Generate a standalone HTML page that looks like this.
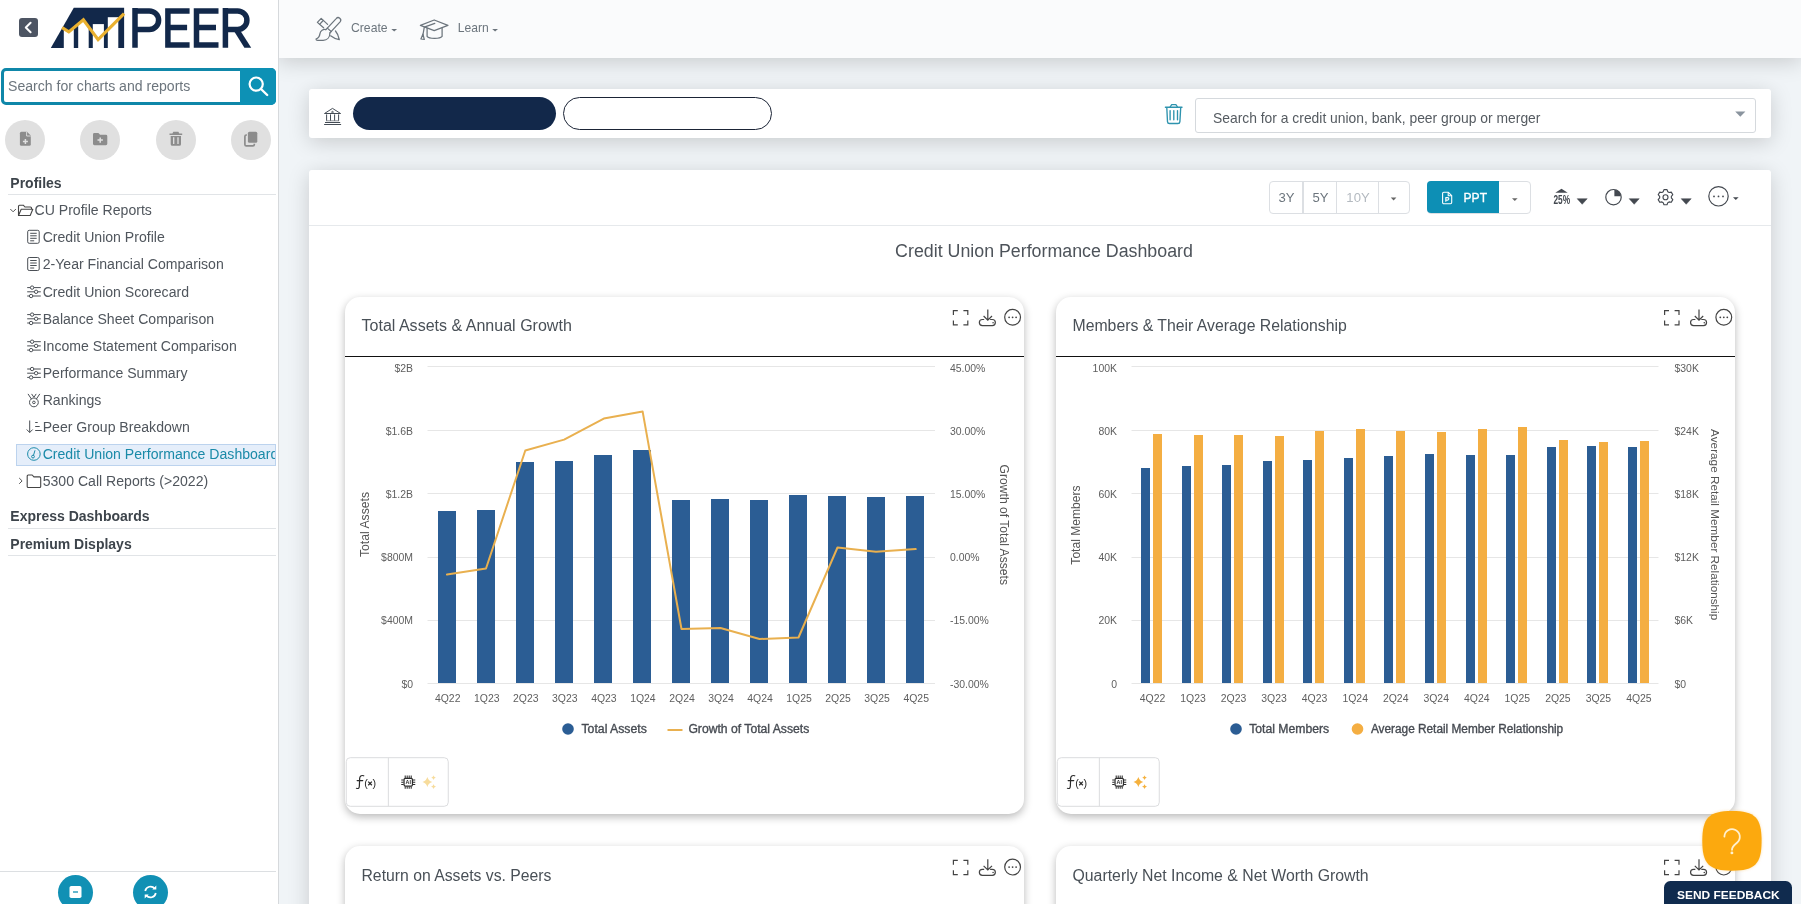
<!DOCTYPE html>
<html><head><meta charset="utf-8"><title>Peer</title>
<style>
*{box-sizing:border-box;margin:0;padding:0}
html,body{width:1801px;height:904px;overflow:hidden}
body{font-family:"Liberation Sans", sans-serif;background:#f0f4f7;position:relative;color:#495057}
.abs{position:absolute}
#side{position:absolute;left:0;top:0;width:278.7px;height:904px;background:#fff;border-right:1px solid #d6d9dc}
#hdr{position:absolute;left:278px;top:0;width:1523px;height:58px;background:#fafbfc;box-shadow:0 4px 21px rgba(0,0,0,.17)}
#inst{position:absolute;left:309px;top:89px;width:1462px;height:49px;background:#fff;border-radius:3px;box-shadow:0 4px 21px rgba(0,0,0,.17)}
#panel{position:absolute;left:309px;top:170px;width:1462px;height:760px;background:#fff;border-radius:3px 3px 0 0;box-shadow:0 4px 21px rgba(0,0,0,.17)}
.card{position:absolute;background:#fff;border-radius:15px;box-shadow:0 3px 8px rgba(0,0,0,.28)}
.ctitle{position:absolute;font-size:16.05px;color:#495057;white-space:nowrap;line-height:20px}
.hline{position:absolute;height:1.3px;background:#111}
svg text.ax{font:10.45px "Liberation Sans", sans-serif;fill:#5e5e5e}
svg text.axt{font:11.4px "Liberation Sans", sans-serif;fill:#555}
svg text.lg{font:12px "Liberation Sans", sans-serif;fill:#464b52;stroke:#464b52;stroke-width:.35px}
.ti{position:absolute;left:42.7px;font-size:14.08px;line-height:20px;color:#50565d;white-space:nowrap}
.ti.sel{color:#1a8aa8;width:232.5px;overflow:hidden}
.sec{position:absolute;left:10.3px;font-size:14px;font-weight:bold;color:#3d444b;line-height:18px;white-space:nowrap}
.sline{position:absolute;left:8px;width:268px;height:1px;background:#e1e4e7}
.cbtn{position:absolute;width:40px;height:40px;border-radius:50%;background:#e0e0e0;top:119.5px}
#wrap{position:absolute;left:0;top:0;width:1801px;height:904px;will-change:transform;overflow:hidden}
</style></head><body><div id="wrap">

<!-- header -->
<div id="hdr"></div>
<div class="abs" style="left:351px;top:20.9px;font-size:12.2px;color:#6c757d;line-height:15px">Create</div>
<div class="abs" style="left:457.8px;top:20.9px;font-size:12.1px;color:#6c757d;line-height:15px">Learn</div>

<!-- institution bar -->
<div id="inst"></div>
<div class="abs" style="left:353px;top:97px;width:202.5px;height:32.5px;border-radius:17px;background:#12284a"></div>
<div class="abs" style="left:563px;top:97px;width:209px;height:32.5px;border-radius:17px;background:#fff;border:1.3px solid #1b2436"></div>
<div class="abs" style="left:1195px;top:97.5px;width:560.5px;height:35px;border:1px solid #d5d9dd;border-radius:3px;background:#fff"></div>
<div class="abs" style="left:1213px;top:109.5px;font-size:13.87px;color:#555b61;line-height:17px;white-space:nowrap">Search for a credit union, bank, peer group or merger</div>

<!-- panel -->
<div id="panel"></div>
<div class="abs" style="left:309px;top:224.8px;width:1462px;height:1px;background:#e6e9ec"></div>
<div class="abs" style="left:895px;top:239.9px;width:298px;text-align:center;font-size:17.81px;color:#4d535a;line-height:22px;white-space:nowrap">Credit Union Performance Dashboard</div>

<!-- toolbar buttons -->
<div class="abs" style="left:1269px;top:181px;width:140.5px;height:32.6px;border:1px solid #dcdfe3;border-radius:4px;background:#fff"></div>
<div class="abs" style="left:1302.3px;top:181px;width:1.6px;height:32.6px;background:#dcdfe3"></div>
<div class="abs" style="left:1335.8px;top:181px;width:1.6px;height:32.6px;background:#dcdfe3"></div>
<div class="abs" style="left:1377.6px;top:181px;width:1.4px;height:32.6px;background:#dcdfe3"></div>
<div class="abs" style="left:1270px;top:189px;width:33px;text-align:center;font-size:13.1px;color:#6c757d;line-height:17px">3Y</div>
<div class="abs" style="left:1304px;top:189px;width:33px;text-align:center;font-size:13.1px;color:#6c757d;line-height:17px">5Y</div>
<div class="abs" style="left:1337px;top:189px;width:42px;text-align:center;font-size:13.1px;color:#b4bac0;line-height:17px">10Y</div>
<div class="abs" style="left:1427px;top:181px;width:103.5px;height:32.6px;border:1px solid #dcdfe3;border-radius:4px;background:#fff"></div>
<div class="abs" style="left:1427px;top:181.4px;width:72px;height:32px;border-radius:4px 0 0 4px;background:#0d8fb5"></div>
<div class="abs" style="left:1463.5px;top:189.5px;font-size:12.1px;color:#fff;line-height:16px;-webkit-text-stroke:.3px #fff">PPT</div>

<!-- cards -->
<div class="card" style="left:345px;top:296.5px;width:679px;height:517.5px"></div>
<div class="card" style="left:1056px;top:296.5px;width:679px;height:517.5px"></div>
<div class="card" style="left:345px;top:846px;width:679px;height:100px"></div>
<div class="card" style="left:1056px;top:846px;width:679px;height:100px"></div>
<div class="hline" style="left:345px;top:355.8px;width:679px"></div>
<div class="hline" style="left:1056px;top:355.8px;width:679px"></div>
<div class="ctitle" style="left:361.5px;top:315px">Total Assets &amp; Annual Growth</div>
<div class="ctitle" style="left:1072.5px;top:315.7px;font-size:15.8px">Members &amp; Their Average Relationship</div>
<div class="ctitle" style="left:361.5px;top:865.5px;font-size:15.75px">Return on Assets vs. Peers</div>
<div class="ctitle" style="left:1072.5px;top:865.5px;font-size:15.84px">Quarterly Net Income &amp; Net Worth Growth</div>

<!-- sidebar -->
<div id="side"></div>
<div class="abs" style="left:1px;top:68px;width:275px;height:36.5px;border:3px solid #0f87a9;border-radius:5px;background:#fff"></div>
<div class="abs" style="left:240px;top:68px;width:36px;height:36.5px;border-radius:0 5px 5px 0;background:#0d91b5"></div>
<div class="abs" style="left:8px;top:77.5px;font-size:14.09px;color:#6c757d;line-height:17px;white-space:nowrap">Search for charts and reports</div>
<div class="cbtn" style="left:5px"></div><div class="cbtn" style="left:80px"></div><div class="cbtn" style="left:156px"></div><div class="cbtn" style="left:231px"></div>
<div class="sec" style="top:174px">Profiles</div><div class="sline" style="top:194px"></div>
<div class="abs" style="left:34.5px;top:200px;font-size:14.08px;line-height:20px;color:#50565d;white-space:nowrap">CU Profile Reports</div>
<div class="abs" style="left:16px;top:443.5px;width:259.5px;height:22px;background:#e5eefa;border:1px solid #bcd3ee"></div>
<div class="ti" style="top:227px">Credit Union Profile</div>
<div class="ti" style="top:254px">2-Year Financial Comparison</div>
<div class="ti" style="top:282px">Credit Union Scorecard</div>
<div class="ti" style="top:309px">Balance Sheet Comparison</div>
<div class="ti" style="top:336px">Income Statement Comparison</div>
<div class="ti" style="top:363px">Performance Summary</div>
<div class="ti" style="top:390px">Rankings</div>
<div class="ti" style="top:417px">Peer Group Breakdown</div>
<div class="ti sel" style="top:444px">Credit Union Performance Dashboard</div>
<div class="ti" style="top:471.2px">5300 Call Reports (&gt;2022)</div>
<div class="sec" style="top:507px">Express Dashboards</div><div class="sline" style="top:528px"></div>
<div class="sec" style="top:535px">Premium Displays</div><div class="sline" style="top:555px"></div>
<div class="abs" style="left:0;top:871px;width:276px;height:1px;background:#dcdfe2"></div>
<div class="abs" style="left:58px;top:874.5px;width:35px;height:35px;border-radius:50%;background:#1190b4"></div>
<div class="abs" style="left:133px;top:874.5px;width:35px;height:35px;border-radius:50%;background:#1190b4"></div>

<!-- overlay svg for all vector stuff -->
<svg class="abs" style="left:0;top:0" width="1801" height="904" viewBox="0 0 1801 904">
<rect x="19" y="18" width="19" height="19" rx="3" fill="#4d5563"/>
<path d="M30.6,22.8 l-4.8,4.7 l4.8,4.7" fill="none" stroke="#fff" stroke-width="2" stroke-linecap="round" stroke-linejoin="round"/>
<polygon points="50.8,47.9 73.8,7.8 124.1,7.8 124.1,47.9" fill="#12284a"/>
<polygon points="63.8,28.8 68.8,31.9 73.8,27.7 73.8,48.5 63.8,48.5" fill="#fff"/>
<polygon points="78.2,24 83.4,19.7 88.7,26.9 88.7,48.5 78.2,48.5" fill="#fff"/>
<rect x="92.8" y="24.1" width="11.1" height="24.5" fill="#fff"/>
<rect x="107.8" y="17.2" width="10.5" height="31.5" fill="#fff"/>
<polyline points="62.1,27.7 68.8,31.9 83.4,19.7 98.1,39.6 124.1,13.6" fill="none" stroke="#e9b02f" stroke-width="3.2" stroke-linejoin="miter"/>
<g fill="none" stroke="#12284a" stroke-width="5.5"><path d="M135,47.8 V8.1 M135,10.9 H149.3 A9.3,9.3 0 0 1 149.3,29.5 H135"/><path d="M189.6,10.9 H167.9 V45 H189.6 M167.9,27.5 H187.1"/><path d="M218.5,10.9 H196.5 V45 H218.5 M196.5,27.5 H216"/><path d="M225.4,47.8 V8.1 M225.4,10.9 H237.6 A9.3,9.3 0 0 1 237.6,29.5 H225.4"/></g>
<polygon points="233.6,30.5 240.2,30.5 251.2,47.8 244.4,47.8" fill="#12284a"/>
<circle cx="256.2" cy="84.1" r="6.6" fill="none" stroke="#fff" stroke-width="2.2"/>
<path d="M261,89 l6.2,6" stroke="#fff" stroke-width="2.4" stroke-linecap="round"/>
<path d="M21.4,131.8 h5.6 l3.8,3.8 v8.7 a1.5,1.5 0 0 1 -1.5,1.5 h-7.9 a1.5,1.5 0 0 1 -1.5,-1.5 v-11 a1.5,1.5 0 0 1 1.5,-1.5 z" fill="#8c8c8c"/>
<path d="M26.6,131.8 v4.2 h4.2" fill="none" stroke="#e0e0e0" stroke-width="0.9"/>
<path d="M25.4,139 v5 M22.9,141.5 h5" stroke="#e0e0e0" stroke-width="1.5"/>
<path d="M94.4,133 h4 l1.7,1.8 h5.8 a1.4,1.4 0 0 1 1.4,1.4 v7.6 a1.4,1.4 0 0 1 -1.4,1.4 h-11.5 a1.4,1.4 0 0 1 -1.4,-1.4 v-9.4 a1.4,1.4 0 0 1 1.4,-1.4 z" fill="#8c8c8c"/>
<path d="M100.2,137.4 v5.4 M97.5,140.1 h5.4" stroke="#e0e0e0" stroke-width="1.5"/>
<path d="M169.5,133.4 h12.7 v1.6 h-12.7 z M173.3,131.8 h5.1 l0.9,1.6 h-6.9 z M170.7,136 h10.3 v8.2 a1.6,1.6 0 0 1 -1.6,1.6 h-7.1 a1.6,1.6 0 0 1 -1.6,-1.6 z" fill="#8c8c8c"/>
<path d="M173.7,137.3 v6.8 M178,137.3 v6.8" stroke="#e0e0e0" stroke-width="1.3"/>
<path d="M249.4,131.8 h6.4 a1.5,1.5 0 0 1 1.5,1.5 v8 a1.5,1.5 0 0 1 -1.5,1.5 h-6.4 a1.5,1.5 0 0 1 -1.5,-1.5 v-8 a1.5,1.5 0 0 1 1.5,-1.5 z" fill="#8c8c8c"/>
<path d="M246.9,135 h-0.6 a1.4,1.4 0 0 0 -1.4,1.4 v8 a1.4,1.4 0 0 0 1.4,1.4 h6.6 a1.4,1.4 0 0 0 1.4,-1.4 v-0.7" fill="none" stroke="#8c8c8c" stroke-width="1.7"/>
<rect x="69.5" y="886" width="12" height="12" rx="1.8" fill="#fff"/>
<path d="M73,892 h5" stroke="#1190b4" stroke-width="1.3"/>
<g fill="none" stroke="#fff" stroke-width="1.7"><path d="M145.2,891 a5.4,5.4 0 0 1 9.5,-2.4"/><path d="M155.8,893 a5.4,5.4 0 0 1 -9.5,2.4"/></g>
<path d="M156.3,885.6 v4 h-4 z M144.7,898.4 v-4 h4 z" fill="#fff"/>
<g fill="none" stroke="#6c757d" stroke-width="1.25" stroke-linejoin="round" stroke-linecap="round">
<path d="M325.9,29.6 L336.2,18.6 a2.5,2.5 0 0 1 3.9,3.2 L329.9,32.9"/>
<path d="M327.3,28.1 l3.9,3.4"/>
<path d="M325.9,29.6 c-2.6,-0.6 -5.6,1 -6,4.2 c-0.3,2.4 -1.6,4.3 -3.9,5.2 c0,0.9 0.6,1.3 1.6,1.3 h5.6 c3.6,0 6.7,-2.6 6.7,-7.4"/>
<path d="M323.6,27.8 L317.4,22.4 L321.2,18.4 L327.6,24.4"/>
<path d="M319.6,24.4 l3.6,-3.9"/>
<path d="M330.6,35.8 c3,2.4 6,3.4 8.7,3.9 c-0.5,-2.9 -1.4,-5.9 -3.8,-8.7"/>
</g>
<path d="M391.3,28.9 h5.8 l-2.9,2.6 z" fill="#6c757d"/>
<g fill="none" stroke="#6c757d" stroke-width="1.25" stroke-linejoin="round" stroke-linecap="round">
<path d="M420.4,25.4 L434.2,20 L447.9,25.4 L434.2,30.6 Z"/>
<path d="M427.1,28.1 V36.4 C429,38.9 439.6,39.3 442.1,36.4 V28.1"/>
<path d="M434.8,23.3 L424.3,27.2 L422.9,35"/>
<path d="M422.9,34.2 L420.9,39 L424.3,39.4 Z"/>
</g>
<path d="M492.2,28.9 h5.8 l-2.9,2.6 z" fill="#6c757d"/>
<g fill="none" stroke="#444c55" stroke-width="1" stroke-linejoin="round">
<path d="M324.5,113.5 L332.5,108.4 L340.6,113.5 Z"/>
<path d="M326.6,114.4 V120.7 M330.5,114.4 V120.7 M334.6,114.4 V120.7 M338.6,114.4 V120.7"/>
<path d="M325,122.5 H340.2 M324.1,124.5 H341.1"/>
<path d="M326.2,120.8 H339" stroke-width="0.6"/>
</g>
<circle cx="332.5" cy="112.1" r="0.8" fill="none" stroke="#444c55" stroke-width="0.9"/>
<g fill="none" stroke="#2e93ae" stroke-width="1.35" stroke-linejoin="round" stroke-linecap="round">
<path d="M1165.4,107.2 H1182"/>
<path d="M1170.1,107 L1171.7,104.6 H1175.9 L1177.5,107"/>
<path d="M1166.8,107.8 L1167.5,121.6 a2,2 0 0 0 2,1.9 h8.4 a2,2 0 0 0 2,-1.9 L1180.7,107.8"/>
<path d="M1170.1,110.6 V119.8 M1173.8,110.6 V119.8 M1177.5,110.6 V119.8"/>
</g>
<path d="M1735.2,111.6 h10.2 l-5.1,5.2 z" fill="#8a949e"/>
<path d="M1390.8,197.6 h5.6 l-2.8,2.8 z" fill="#666"/>
<path d="M1512,198.3 h5.6 l-2.8,2.8 z" fill="#666"/>
<g fill="none" stroke="#fff" stroke-width="1.1" stroke-linejoin="round"><path d="M1443.8,192.3 h4.6 l3.3,3.3 v6.9 a1.2,1.2 0 0 1 -1.2,1.2 h-6.7 a1.2,1.2 0 0 1 -1.2,-1.2 v-9 a1.2,1.2 0 0 1 1.2,-1.2 z"/><path d="M1448.2,192.5 v3.3 h3.3"/><path d="M1445.8,201.8 v-4.2 h1.8 a1.25,1.25 0 0 1 0,2.5 h-1.8"/></g>
<path d="M1555.3,192.7 L1561.5,188.8 L1567.7,192.7 Z" fill="#444950"/>
<text x="1561.8" y="203.5" text-anchor="middle" textLength="16.6" lengthAdjust="spacingAndGlyphs" style="font:bold 13.2px 'Liberation Sans',sans-serif" fill="#444950">25%</text>
<path d="M1577.2,198.7 h10 l-5,5.6 z" fill="#444950" stroke="#444950" stroke-width="0.5" stroke-linejoin="round"/>
<path d="M1629.2,198.7 h10 l-5,5.6 z" fill="#444950" stroke="#444950" stroke-width="0.5" stroke-linejoin="round"/>
<path d="M1681.2,198.7 h10 l-5,5.6 z" fill="#444950" stroke="#444950" stroke-width="0.5" stroke-linejoin="round"/>
<circle cx="1613.5" cy="197.2" r="7.7" fill="none" stroke="#444950" stroke-width="1.2"/>
<path d="M1614.4,196.3 V189.8 A6.8,6.8 0 0 1 1620.9,196.3 Z" fill="#444950"/>
<path d="M1663.20,191.77 L1663.97,189.65 L1667.03,189.65 L1667.80,191.77 L1669.06,192.49 L1671.27,192.10 L1672.80,194.75 L1671.35,196.47 L1671.35,197.93 L1672.80,199.65 L1671.27,202.30 L1669.06,201.91 L1667.80,202.63 L1667.03,204.75 L1663.97,204.75 L1663.20,202.63 L1661.94,201.91 L1659.73,202.30 L1658.20,199.65 L1659.65,197.93 L1659.65,196.47 L1658.20,194.75 L1659.73,192.10 L1661.94,192.49 Z" fill="none" stroke="#444950" stroke-width="1.15" stroke-linejoin="round"/>
<circle cx="1665.5" cy="197.2" r="2.5" fill="none" stroke="#444950" stroke-width="1.15"/>
<circle cx="1718.5" cy="196.3" r="9.7" fill="none" stroke="#444950" stroke-width="1.2"/>
<circle cx="1714" cy="196.4" r="0.9" fill="#444950"/>
<circle cx="1718.5" cy="196.4" r="0.9" fill="#444950"/>
<circle cx="1723" cy="196.4" r="0.9" fill="#444950"/>
<path d="M1733,197.3 h5.6 l-2.8,2.8 z" fill="#444950"/>
<line x1="427.5" x2="935.0" y1="366.5" y2="366.5" stroke="#e6e6e6" stroke-width="1"/>
<line x1="427.5" x2="935.0" y1="430.5" y2="430.5" stroke="#e6e6e6" stroke-width="1"/>
<line x1="427.5" x2="935.0" y1="493.5" y2="493.5" stroke="#e6e6e6" stroke-width="1"/>
<line x1="427.5" x2="935.0" y1="557.5" y2="557.5" stroke="#e6e6e6" stroke-width="1"/>
<line x1="427.5" x2="935.0" y1="620.5" y2="620.5" stroke="#e6e6e6" stroke-width="1"/>
<line x1="427.5" x2="935.0" y1="683.5" y2="683.5" stroke="#e6e6e6" stroke-width="1"/>
<rect x="438" y="511" width="18" height="172.0" fill="#2b5d94"/>
<rect x="477" y="510" width="18" height="173.0" fill="#2b5d94"/>
<rect x="516" y="462" width="18" height="221.0" fill="#2b5d94"/>
<rect x="555" y="461" width="18" height="222.0" fill="#2b5d94"/>
<rect x="594" y="455" width="18" height="228.0" fill="#2b5d94"/>
<rect x="633" y="450" width="18" height="233.0" fill="#2b5d94"/>
<rect x="672" y="500" width="18" height="183.0" fill="#2b5d94"/>
<rect x="711" y="499" width="18" height="184.0" fill="#2b5d94"/>
<rect x="750" y="500" width="18" height="183.0" fill="#2b5d94"/>
<rect x="789" y="495" width="18" height="188.0" fill="#2b5d94"/>
<rect x="828" y="496" width="18" height="187.0" fill="#2b5d94"/>
<rect x="867" y="497" width="18" height="186.0" fill="#2b5d94"/>
<rect x="906" y="496" width="18" height="187.0" fill="#2b5d94"/>
<polyline points="447,574.5 486,568.5 525.3,450.5 564.1,439.6 603.8,418.6 642.6,411.4 681.5,629 720.5,628 759.5,639 798.5,637.5 837.5,547.5 876,551.8 915.7,549.1" fill="none" stroke="#e9b04f" stroke-width="2" stroke-linejoin="round" stroke-linecap="round"/>
<text x="413" y="372.2" text-anchor="end" class="ax">$2B</text>
<text x="413" y="434.8" text-anchor="end" class="ax">$1.6B</text>
<text x="413" y="497.8" text-anchor="end" class="ax">$1.2B</text>
<text x="413" y="560.8" text-anchor="end" class="ax">$800M</text>
<text x="413" y="623.6" text-anchor="end" class="ax">$400M</text>
<text x="413" y="687.5" text-anchor="end" class="ax">$0</text>
<text x="950" y="372.2" class="ax">45.00%</text>
<text x="950" y="434.8" class="ax">30.00%</text>
<text x="950" y="497.8" class="ax">15.00%</text>
<text x="950" y="560.8" class="ax">0.00%</text>
<text x="950" y="623.6" class="ax">-15.00%</text>
<text x="950" y="687.5" class="ax">-30.00%</text>
<text x="447.7" y="702" text-anchor="middle" class="ax">4Q22</text>
<text x="486.8" y="702" text-anchor="middle" class="ax">1Q23</text>
<text x="525.8" y="702" text-anchor="middle" class="ax">2Q23</text>
<text x="564.8" y="702" text-anchor="middle" class="ax">3Q23</text>
<text x="603.9" y="702" text-anchor="middle" class="ax">4Q23</text>
<text x="642.9" y="702" text-anchor="middle" class="ax">1Q24</text>
<text x="682.0" y="702" text-anchor="middle" class="ax">2Q24</text>
<text x="721.0" y="702" text-anchor="middle" class="ax">3Q24</text>
<text x="760.0" y="702" text-anchor="middle" class="ax">4Q24</text>
<text x="799.1" y="702" text-anchor="middle" class="ax">1Q25</text>
<text x="838.1" y="702" text-anchor="middle" class="ax">2Q25</text>
<text x="877.1" y="702" text-anchor="middle" class="ax">3Q25</text>
<text x="916.2" y="702" text-anchor="middle" class="ax">4Q25</text>
<text transform="translate(369.3,524.5) rotate(-90)" text-anchor="middle" class="axt" style="font-size:12.2px">Total Assets</text>
<text transform="translate(1000.3,524.8) rotate(90)" text-anchor="middle" class="axt" style="font-size:12.13px">Growth of Total Assets</text>
<circle cx="568" cy="729" r="5.8" fill="#2b5d94"/>
<text x="581.5" y="733.3" class="lg" textLength="65.3" lengthAdjust="spacingAndGlyphs">Total Assets</text>
<line x1="667.5" x2="682.5" y1="730" y2="730" stroke="#e9b04f" stroke-width="2"/>
<text x="688.4" y="733.3" class="lg" textLength="120.9" lengthAdjust="spacingAndGlyphs">Growth of Total Assets</text>
<line x1="1131.5" x2="1658.5" y1="366.5" y2="366.5" stroke="#e6e6e6" stroke-width="1"/>
<line x1="1131.5" x2="1658.5" y1="430.5" y2="430.5" stroke="#e6e6e6" stroke-width="1"/>
<line x1="1131.5" x2="1658.5" y1="493.5" y2="493.5" stroke="#e6e6e6" stroke-width="1"/>
<line x1="1131.5" x2="1658.5" y1="557.5" y2="557.5" stroke="#e6e6e6" stroke-width="1"/>
<line x1="1131.5" x2="1658.5" y1="620.5" y2="620.5" stroke="#e6e6e6" stroke-width="1"/>
<line x1="1131.5" x2="1658.5" y1="683.5" y2="683.5" stroke="#e6e6e6" stroke-width="1"/>
<rect x="1141" y="468" width="9" height="215.0" fill="#2b5d94"/>
<rect x="1153" y="434" width="9" height="249.0" fill="#f4ae42"/>
<rect x="1182" y="466" width="9" height="217.0" fill="#2b5d94"/>
<rect x="1194" y="435" width="9" height="248.0" fill="#f4ae42"/>
<rect x="1222" y="465" width="9" height="218.0" fill="#2b5d94"/>
<rect x="1234" y="435" width="9" height="248.0" fill="#f4ae42"/>
<rect x="1263" y="461" width="9" height="222.0" fill="#2b5d94"/>
<rect x="1275" y="436" width="9" height="247.0" fill="#f4ae42"/>
<rect x="1303" y="460" width="9" height="223.0" fill="#2b5d94"/>
<rect x="1315" y="431" width="9" height="252.0" fill="#f4ae42"/>
<rect x="1344" y="458" width="9" height="225.0" fill="#2b5d94"/>
<rect x="1356" y="429" width="9" height="254.0" fill="#f4ae42"/>
<rect x="1384" y="456" width="9" height="227.0" fill="#2b5d94"/>
<rect x="1396" y="431" width="9" height="252.0" fill="#f4ae42"/>
<rect x="1425" y="454" width="9" height="229.0" fill="#2b5d94"/>
<rect x="1437" y="432" width="9" height="251.0" fill="#f4ae42"/>
<rect x="1466" y="455" width="9" height="228.0" fill="#2b5d94"/>
<rect x="1478" y="429" width="9" height="254.0" fill="#f4ae42"/>
<rect x="1506" y="455" width="9" height="228.0" fill="#2b5d94"/>
<rect x="1518" y="427" width="9" height="256.0" fill="#f4ae42"/>
<rect x="1547" y="447" width="9" height="236.0" fill="#2b5d94"/>
<rect x="1559" y="440" width="9" height="243.0" fill="#f4ae42"/>
<rect x="1587" y="446" width="9" height="237.0" fill="#2b5d94"/>
<rect x="1599" y="442" width="9" height="241.0" fill="#f4ae42"/>
<rect x="1628" y="447" width="9" height="236.0" fill="#2b5d94"/>
<rect x="1640" y="441" width="9" height="242.0" fill="#f4ae42"/>
<text x="1117" y="372.2" text-anchor="end" class="ax">100K</text>
<text x="1117" y="434.8" text-anchor="end" class="ax">80K</text>
<text x="1117" y="497.8" text-anchor="end" class="ax">60K</text>
<text x="1117" y="560.8" text-anchor="end" class="ax">40K</text>
<text x="1117" y="623.6" text-anchor="end" class="ax">20K</text>
<text x="1117" y="687.5" text-anchor="end" class="ax">0</text>
<text x="1674.5" y="372.2" class="ax">$30K</text>
<text x="1674.5" y="434.8" class="ax">$24K</text>
<text x="1674.5" y="497.8" class="ax">$18K</text>
<text x="1674.5" y="560.8" class="ax">$12K</text>
<text x="1674.5" y="623.6" class="ax">$6K</text>
<text x="1674.5" y="687.5" class="ax">$0</text>
<text x="1152.5" y="702" text-anchor="middle" class="ax">4Q22</text>
<text x="1193.0" y="702" text-anchor="middle" class="ax">1Q23</text>
<text x="1233.5" y="702" text-anchor="middle" class="ax">2Q23</text>
<text x="1274.1" y="702" text-anchor="middle" class="ax">3Q23</text>
<text x="1314.6" y="702" text-anchor="middle" class="ax">4Q23</text>
<text x="1355.2" y="702" text-anchor="middle" class="ax">1Q24</text>
<text x="1395.7" y="702" text-anchor="middle" class="ax">2Q24</text>
<text x="1436.2" y="702" text-anchor="middle" class="ax">3Q24</text>
<text x="1476.8" y="702" text-anchor="middle" class="ax">4Q24</text>
<text x="1517.3" y="702" text-anchor="middle" class="ax">1Q25</text>
<text x="1557.9" y="702" text-anchor="middle" class="ax">2Q25</text>
<text x="1598.4" y="702" text-anchor="middle" class="ax">3Q25</text>
<text x="1638.9" y="702" text-anchor="middle" class="ax">4Q25</text>
<text transform="translate(1080.3,525) rotate(-90)" text-anchor="middle" class="axt" style="font-size:12.1px">Total Members</text>
<text transform="translate(1711,524.7) rotate(90)" text-anchor="middle" class="axt" style="font-size:11.76px">Average Retail Member Relationship</text>
<circle cx="1236" cy="729" r="5.8" fill="#2b5d94"/>
<text x="1249.2" y="733.3" class="lg" textLength="79.9" lengthAdjust="spacingAndGlyphs">Total Members</text>
<circle cx="1357.5" cy="729" r="5.8" fill="#f4ae42"/>
<text x="1370.9" y="733.3" class="lg" textLength="192.3" lengthAdjust="spacingAndGlyphs">Average Retail Member Relationship</text>
<g fill="none" stroke="#444" stroke-width="1.2" stroke-linecap="butt">
<path d="M953.4,315 v-4.4 h4.4 M963.4,310.6 h4.4 v4.4 M967.8,320.5 v4.4 h-4.4 M957.8,324.9 h-4.4 v-4.4"/>
<path d="M987.8,309.5 v10.5 M983.5999999999999,316 l4.2,4.2 l4.2,-4.2"/>
<path d="M984.1999999999999,319.5 h-1.8 a3.05,3.05 0 0 0 0,6.1 h9.9 a3.05,3.05 0 0 0 0,-6.1 h-2.2"/>
<circle cx="1012.5999999999999" cy="317.3" r="7.9"/>
</g>
<circle cx="993.0999999999999" cy="322.7" r="0.8" fill="#444"/>
<g fill="#444"><circle cx="1009.0999999999999" cy="317.3" r="0.9"/><circle cx="1012.5999999999999" cy="317.3" r="0.9"/><circle cx="1016.0999999999999" cy="317.3" r="0.9"/></g>
<g fill="none" stroke="#444" stroke-width="1.2" stroke-linecap="butt">
<path d="M1664.6,315 v-4.4 h4.4 M1674.6,310.6 h4.4 v4.4 M1679,320.5 v4.4 h-4.4 M1669,324.9 h-4.4 v-4.4"/>
<path d="M1699,309.5 v10.5 M1694.8,316 l4.2,4.2 l4.2,-4.2"/>
<path d="M1695.4,319.5 h-1.8 a3.05,3.05 0 0 0 0,6.1 h9.9 a3.05,3.05 0 0 0 0,-6.1 h-2.2"/>
<circle cx="1723.8" cy="317.3" r="7.9"/>
</g>
<circle cx="1704.3" cy="322.7" r="0.8" fill="#444"/>
<g fill="#444"><circle cx="1720.3" cy="317.3" r="0.9"/><circle cx="1723.8" cy="317.3" r="0.9"/><circle cx="1727.3" cy="317.3" r="0.9"/></g>
<g fill="none" stroke="#444" stroke-width="1.2" stroke-linecap="butt">
<path d="M953.4,864.8 v-4.4 h4.4 M963.4,860.4 h4.4 v4.4 M967.8,870.3 v4.4 h-4.4 M957.8,874.6999999999999 h-4.4 v-4.4"/>
<path d="M987.8,859.3 v10.5 M983.5999999999999,865.8 l4.2,4.2 l4.2,-4.2"/>
<path d="M984.1999999999999,869.3 h-1.8 a3.05,3.05 0 0 0 0,6.1 h9.9 a3.05,3.05 0 0 0 0,-6.1 h-2.2"/>
<circle cx="1012.5999999999999" cy="867.0999999999999" r="7.9"/>
</g>
<circle cx="993.0999999999999" cy="872.5" r="0.8" fill="#444"/>
<g fill="#444"><circle cx="1009.0999999999999" cy="867.0999999999999" r="0.9"/><circle cx="1012.5999999999999" cy="867.0999999999999" r="0.9"/><circle cx="1016.0999999999999" cy="867.0999999999999" r="0.9"/></g>
<g fill="none" stroke="#444" stroke-width="1.2" stroke-linecap="butt">
<path d="M1664.6,864.8 v-4.4 h4.4 M1674.6,860.4 h4.4 v4.4 M1679,870.3 v4.4 h-4.4 M1669,874.6999999999999 h-4.4 v-4.4"/>
<path d="M1699,859.3 v10.5 M1694.8,865.8 l4.2,4.2 l4.2,-4.2"/>
<path d="M1695.4,869.3 h-1.8 a3.05,3.05 0 0 0 0,6.1 h9.9 a3.05,3.05 0 0 0 0,-6.1 h-2.2"/>
<circle cx="1723.8" cy="867.0999999999999" r="7.9"/>
</g>
<circle cx="1704.3" cy="872.5" r="0.8" fill="#444"/>
<g fill="#444"><circle cx="1720.3" cy="867.0999999999999" r="0.9"/><circle cx="1723.8" cy="867.0999999999999" r="0.9"/><circle cx="1727.3" cy="867.0999999999999" r="0.9"/></g>
<rect x="346.25" y="757.7" width="102" height="48.6" rx="4" fill="#fff" stroke="#dbdcde"/>
<line x1="388.35" x2="388.35" y1="757.7" y2="806.2" stroke="#dbdcde"/>
<path d="M363.75,775.8000000000001 c-2.6,-0.9 -4,0.3 -4.1,2.6 l-0.3,7.6 c-0.1,2.2 -0.9,2.9 -2.9,2.3 M357.15,780.6 h5.6" fill="none" stroke="#2b2b2b" stroke-width="1.2" stroke-linecap="round"/>
<text x="364.25" y="787.0" style="font:10.8px 'Liberation Sans',sans-serif" fill="#2b2b2b">(</text>
<text x="372.55" y="787.0" style="font:10.8px 'Liberation Sans',sans-serif" fill="#2b2b2b">)</text>
<path d="M368.25,781.6 l3.6,3.6 M371.85,781.6 l-3.6,3.6" stroke="#2b2b2b" stroke-width="1.25"/>
<rect x="404.05" y="778.3000000000001" width="8.4" height="7.8" rx="1.3" fill="none" stroke="#2b2b2b" stroke-width="1.2"/>
<path d="M405.2,777.9000000000001 v-2.3 M405.2,786.5 v2.3 M407.2,777.9000000000001 v-2.3 M407.2,786.5 v2.3 M409.2,777.9000000000001 v-2.3 M409.2,786.5 v2.3 M411.2,777.9000000000001 v-2.3 M411.2,786.5 v2.3 M403.65000000000003,779.9 h-2.4 M412.84999999999997,779.9 h2.4 M403.65000000000003,782.2 h-2.4 M412.84999999999997,782.2 h2.4 M403.65000000000003,784.5 h-2.4 M412.84999999999997,784.5 h2.4" stroke="#2b2b2b" stroke-width="1.05"/>
<text x="408.25" y="784.2" text-anchor="middle" style="font:bold 5.4px 'Liberation Sans',sans-serif" fill="#2b2b2b">AI</text>
<g fill="#f7dc9c">
<path d="M427.35,777.1 C428.25,779.8 429.55,781.1 432.25,782.0 C429.55,782.9 428.25,784.2 427.35,786.9 C426.45000000000005,784.2 425.15000000000003,782.9 422.45000000000005,782.0 C425.15000000000003,781.1 426.45000000000005,779.8 427.35,777.1 Z"/>
<path d="M433.55,775.3000000000001 C433.95,776.8000000000001 434.45,777.3000000000001 435.95,777.7 C434.45,778.1 433.95,778.6 433.55,780.1 C433.15000000000003,778.6 432.65000000000003,778.1 431.15000000000003,777.7 C432.65000000000003,777.3000000000001 433.15000000000003,776.8000000000001 433.55,775.3000000000001 Z"/>
<path d="M433.55,784.1 C433.95,785.8000000000001 434.45,786.3000000000001 436.15000000000003,786.7 C434.45,787.1 433.95,787.6 433.55,789.3000000000001 C433.15000000000003,787.6 432.65000000000003,787.1 430.95,786.7 C432.65000000000003,786.3000000000001 433.15000000000003,785.8000000000001 433.55,784.1 Z"/>
</g>
<rect x="1057.25" y="757.7" width="102" height="48.6" rx="4" fill="#fff" stroke="#dbdcde"/>
<line x1="1099.35" x2="1099.35" y1="757.7" y2="806.2" stroke="#dbdcde"/>
<path d="M1074.75,775.8000000000001 c-2.6,-0.9 -4,0.3 -4.1,2.6 l-0.3,7.6 c-0.1,2.2 -0.9,2.9 -2.9,2.3 M1068.15,780.6 h5.6" fill="none" stroke="#2b2b2b" stroke-width="1.2" stroke-linecap="round"/>
<text x="1075.25" y="787.0" style="font:10.8px 'Liberation Sans',sans-serif" fill="#2b2b2b">(</text>
<text x="1083.55" y="787.0" style="font:10.8px 'Liberation Sans',sans-serif" fill="#2b2b2b">)</text>
<path d="M1079.25,781.6 l3.6,3.6 M1082.85,781.6 l-3.6,3.6" stroke="#2b2b2b" stroke-width="1.25"/>
<rect x="1115.05" y="778.3000000000001" width="8.4" height="7.8" rx="1.3" fill="none" stroke="#2b2b2b" stroke-width="1.2"/>
<path d="M1116.2,777.9000000000001 v-2.3 M1116.2,786.5 v2.3 M1118.2,777.9000000000001 v-2.3 M1118.2,786.5 v2.3 M1120.2,777.9000000000001 v-2.3 M1120.2,786.5 v2.3 M1122.2,777.9000000000001 v-2.3 M1122.2,786.5 v2.3 M1114.6499999999999,779.9 h-2.4 M1123.8500000000001,779.9 h2.4 M1114.6499999999999,782.2 h-2.4 M1123.8500000000001,782.2 h2.4 M1114.6499999999999,784.5 h-2.4 M1123.8500000000001,784.5 h2.4" stroke="#2b2b2b" stroke-width="1.05"/>
<text x="1119.25" y="784.2" text-anchor="middle" style="font:bold 5.4px 'Liberation Sans',sans-serif" fill="#2b2b2b">AI</text>
<g fill="#f5b13d">
<path d="M1138.35,777.1 C1139.25,779.8 1140.55,781.1 1143.25,782.0 C1140.55,782.9 1139.25,784.2 1138.35,786.9 C1137.4499999999998,784.2 1136.1499999999999,782.9 1133.4499999999998,782.0 C1136.1499999999999,781.1 1137.4499999999998,779.8 1138.35,777.1 Z"/>
<path d="M1144.55,775.3000000000001 C1144.95,776.8000000000001 1145.45,777.3000000000001 1146.95,777.7 C1145.45,778.1 1144.95,778.6 1144.55,780.1 C1144.1499999999999,778.6 1143.6499999999999,778.1 1142.1499999999999,777.7 C1143.6499999999999,777.3000000000001 1144.1499999999999,776.8000000000001 1144.55,775.3000000000001 Z"/>
<path d="M1144.55,784.1 C1144.95,785.8000000000001 1145.45,786.3000000000001 1147.1499999999999,786.7 C1145.45,787.1 1144.95,787.6 1144.55,789.3000000000001 C1144.1499999999999,787.6 1143.6499999999999,787.1 1141.95,786.7 C1143.6499999999999,786.3000000000001 1144.1499999999999,785.8000000000001 1144.55,784.1 Z"/>
</g>
<path d="M10.3,209 l2.8,2.8 l2.8,-2.8" fill="none" stroke="#555" stroke-width="1"/>
<path d="M18.5,215.5 v-9.3 a1,1 0 0 1 1,-1 h3.8 l1.6,1.8 h5.6 a1,1 0 0 1 1,1 v1.8 M18.5,215.5 l2.7,-6.2 h11.6 l-2.6,6.2 z" fill="none" stroke="#444" stroke-width="1.1" stroke-linejoin="round"/>
<g fill="none" stroke="#4a4f55" stroke-width="1"><rect x="27.7" y="230.3" width="11.5" height="13" rx="1.5"/><path d="M30.2,233.3 h6.5 M30.2,235.8 h6.5 M30.2,238.3 h6.5 M30.2,240.8 h4"/></g>
<g fill="none" stroke="#4a4f55" stroke-width="1"><rect x="27.7" y="257.5" width="11.5" height="13" rx="1.5"/><path d="M30.2,260.5 h6.5 M30.2,263 h6.5 M30.2,265.5 h6.5 M30.2,268 h4"/></g>
<g fill="none" stroke="#4a4f55" stroke-width="1"><path d="M27.2,287.6 h3.2 M33.8,287.6 h7 M27.2,291.8 h7.2 M37.8,291.8 h3 M27.2,296.0 h2.2 M32.8,296.0 h8"/><circle cx="32.1" cy="287.6" r="1.7"/><circle cx="36.1" cy="291.8" r="1.7"/><circle cx="31.099999999999998" cy="296.0" r="1.7"/></g>
<g fill="none" stroke="#4a4f55" stroke-width="1"><path d="M27.2,314.6 h3.2 M33.8,314.6 h7 M27.2,318.8 h7.2 M37.8,318.8 h3 M27.2,323.0 h2.2 M32.8,323.0 h8"/><circle cx="32.1" cy="314.6" r="1.7"/><circle cx="36.1" cy="318.8" r="1.7"/><circle cx="31.099999999999998" cy="323.0" r="1.7"/></g>
<g fill="none" stroke="#4a4f55" stroke-width="1"><path d="M27.2,341.7 h3.2 M33.8,341.7 h7 M27.2,345.9 h7.2 M37.8,345.9 h3 M27.2,350.09999999999997 h2.2 M32.8,350.09999999999997 h8"/><circle cx="32.1" cy="341.7" r="1.7"/><circle cx="36.1" cy="345.9" r="1.7"/><circle cx="31.099999999999998" cy="350.09999999999997" r="1.7"/></g>
<g fill="none" stroke="#4a4f55" stroke-width="1"><path d="M27.2,369.0 h3.2 M33.8,369.0 h7 M27.2,373.2 h7.2 M37.8,373.2 h3 M27.2,377.4 h2.2 M32.8,377.4 h8"/><circle cx="32.1" cy="369.0" r="1.7"/><circle cx="36.1" cy="373.2" r="1.7"/><circle cx="31.099999999999998" cy="377.4" r="1.7"/></g>
<g fill="none" stroke="#4a4f55" stroke-width="1"><circle cx="33.9" cy="402.4" r="4.4"/><path d="M28.0,393.9 l3.6,5.4 M39.8,393.9 l-3.6,5.4 M31.6,393.9 l2.3,3.4 l2.3,-3.4"/><circle cx="33.9" cy="402.4" r="1.3"/></g>
<g fill="none" stroke="#4a4f55" stroke-width="1"><path d="M29.7,420.5 v12 M26.7,429.5 l3,3 l3,-3 M35.2,422.5 h2.5 M35.2,426.5 h4.5 M35.2,430.5 h6.5"/></g>
<g fill="none" stroke="#1a8aa8" stroke-width="1"><circle cx="33.9" cy="454" r="6.3"/><circle cx="33.0" cy="456.6" r="1.4"/><path d="M33.5,455.3 l1.5,-5 M30.0,453.5 v0.1 M31.2,450.7 v0.1 M37.8,453.5 v0.1"/></g>
<path d="M19.2,478 l2.9,2.9 l-2.9,2.9" fill="none" stroke="#555" stroke-width="1"/>
<path d="M27.2,486.5 v-10.5 a1,1 0 0 1 1,-1 h4 l1.7,1.9 h5.8 a1,1 0 0 1 1,1 v8.6 a1,1 0 0 1 -1,1 h-11.5 a1,1 0 0 1 -1,-1 z" fill="none" stroke="#444" stroke-width="1.1" stroke-linejoin="round"/>
</svg>
<!-- help / feedback (on top) -->
<svg class="abs" style="left:0;top:0" width="1801" height="904" viewBox="0 0 1801 904">
<defs><filter id="hs" x="-20%" y="-20%" width="140%" height="140%"><feGaussianBlur stdDeviation="1.6"/></filter></defs>
<path d="M1732,810.9 C1755,810.9 1761.6,817.5 1761.6,840.8 C1761.6,864 1755,870.7 1732,870.7 C1709,870.7 1702.3,864 1702.3,840.8 C1702.3,817.5 1709,810.9 1732,810.9 Z" fill="#f8c873" opacity=".55" filter="url(#hs)"/>
<path d="M1732,810.9 C1755,810.9 1761.6,817.5 1761.6,840.8 C1761.6,864 1755,870.7 1732,870.7 C1709,870.7 1702.3,864 1702.3,840.8 C1702.3,817.5 1709,810.9 1732,810.9 Z" fill="#fca90e"/>
<path d="M1724.4,836.6 a7.7,7.7 0 1 1 12.6,6.2 c-3,2.4 -5,3.6 -5,7" fill="none" stroke="#fff1d0" stroke-width="1.8" stroke-linecap="round"/>
<circle cx="1731.9" cy="852.9" r="1.45" fill="#fff1d0"/>
<path d="M1664,904 V887.4 a6.3,6.3 0 0 1 6.3,-6.3 H1785.7 a6.3,6.3 0 0 1 6.3,6.3 V904 Z" fill="#102b4e"/>
<text x="1677" y="899.3" textLength="102.7" lengthAdjust="spacingAndGlyphs" style="font:bold 11.6px 'Liberation Sans',sans-serif" fill="#fff">SEND FEEDBACK</text>
</svg>
</div></body></html>
